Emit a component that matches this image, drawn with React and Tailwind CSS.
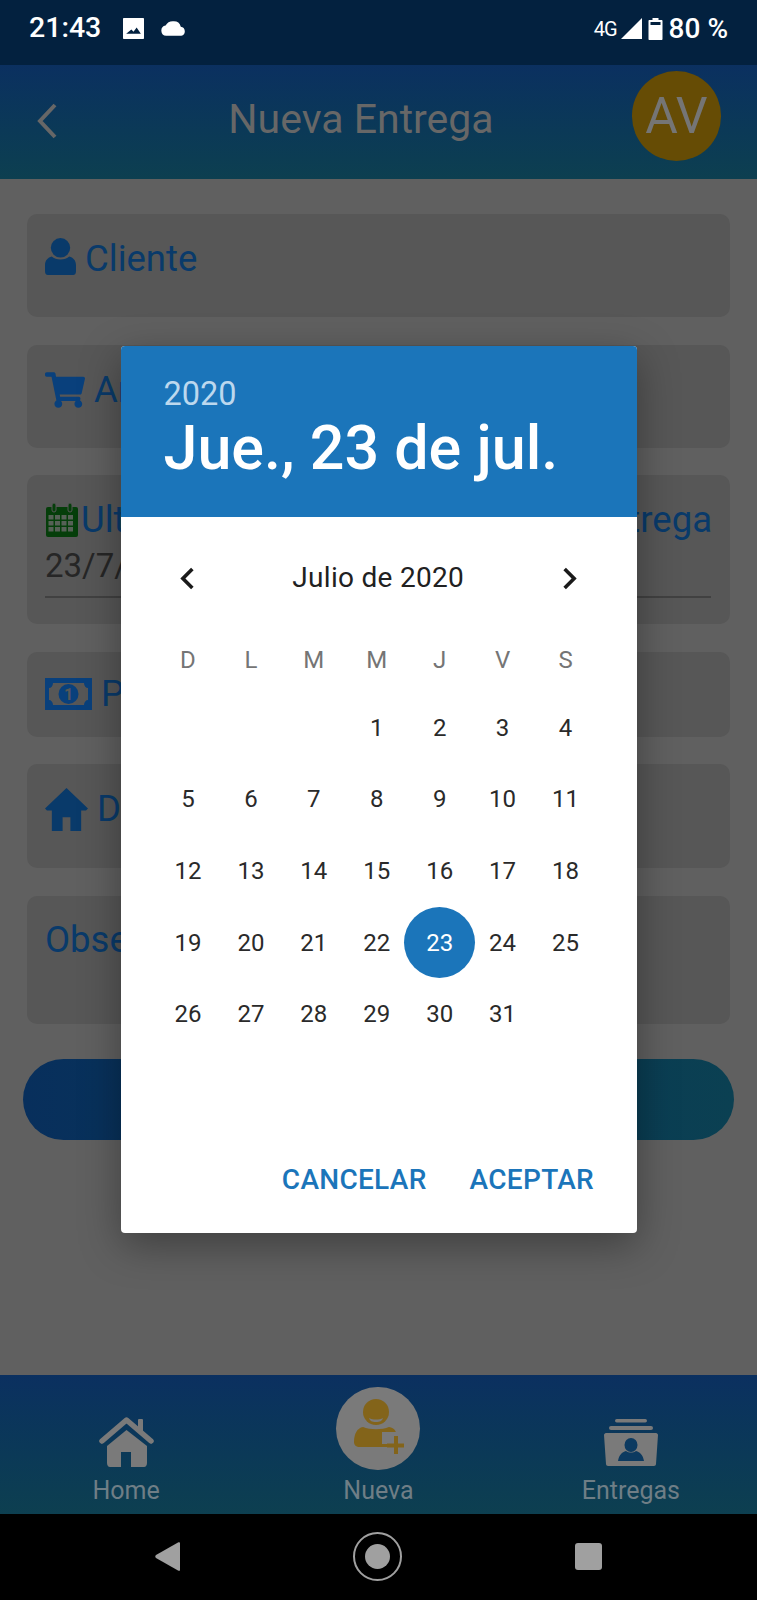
import { FaShoppingCart } from 'react-icons/fa';

const font = { fontFamily: 'Roboto, "Liberation Sans", sans-serif' };

const weeks = [
  ['', '', '', 1, 2, 3, 4],
  [5, 6, 7, 8, 9, 10, 11],
  [12, 13, 14, 15, 16, 17, 18],
  [19, 20, 21, 22, 23, 24, 25],
  [26, 27, 28, 29, 30, 31, ''],
];

function UserIcon() {
  return (
    <svg viewBox="0 0 32 38" className="w-[31px] h-[37px] shrink-0 -mt-[6px] fill-[#093a6a]">
      <circle cx="16" cy="10" r="10" />
      <path d="M7 19c4 4 14 4 18 0 4 1 7 4 7 9v6c0 3-1 4-3 4H3c-2 0-3-1-3-4v-6c0-5 3-8 7-9z" />
    </svg>
  );
}

function CalendarIcon() {
  return (
    <svg viewBox="0 0 34 36" className="w-[34px] h-[36px] shrink-0">
      <rect x="1" y="5" width="32" height="30" rx="2" fill="#053e0a" />
      <rect x="7" y="1" width="4" height="9" rx="2" fill="#053e0a" stroke="#575757" strokeWidth="1" />
      <rect x="23" y="1" width="4" height="9" rx="2" fill="#053e0a" stroke="#575757" strokeWidth="1" />
      <g fill="#566156">
        {[13, 19, 25].map((y) =>
          [3.5, 10, 16.5, 23].map((x) => <rect key={`${x}-${y}`} x={x} y={y} width="5" height="4.5" />)
        )}
      </g>
    </svg>
  );
}

function MoneyIcon() {
  return (
    <svg viewBox="0 0 47 32" className="w-[47px] h-[32px] shrink-0">
      <rect width="47" height="32" fill="#09407c" />
      <path d="M8 5h31c0 3 2 5 4 5v12c-2 0-4 2-4 5H8c0-3-2-5-4-5V10c2 0 4-2 4-5z" fill="#575757" />
      <circle cx="23.5" cy="16" r="10" fill="#09407c" />
      <text x="23.5" y="22" textAnchor="middle" fontSize="16" fontWeight="700" fill="#575757" style={font}>1</text>
    </svg>
  );
}

function HomeIcon() {
  return (
    <svg viewBox="0 0 44 44" className="w-[43px] h-[43px] shrink-0 fill-[#093a6a]">
      <path d="M22 0L0 21l2 2h5v21h11V30h8v14h11V23h5l2-2z" />
    </svg>
  );
}

function NavHouse() {
  return (
    <svg viewBox="0 0 55 50" className="w-[55px] h-[50px]">
      <path d="M3 24L27.500 3 52 24" fill="none" stroke="#7a7a7a" strokeWidth="5.500" strokeLinecap="round" strokeLinejoin="round" />
      <rect x="39" y="2" width="5" height="13" rx="1" fill="#7a7a7a" />
      <path fillRule="evenodd" fill="#7a7a7a" d="M27.500 13L48 29v17c0 2-1 4-3 4H11c-2 0-3-2-3-4V29zM22 35v15h10V35z" />
    </svg>
  );
}

function NavPerson() {
  return (
    <svg viewBox="0 0 50 55" className="w-[50px] h-[55px] -mt-[4px] -ml-[2px]">
      <circle cx="22" cy="13" r="13" fill="#83641a" />
      <path d="M15 19c4 2 10 2 14 0-1 3-3 4-7 4s-6-1-7-4z" fill="#7a7a7a" />
      <path d="M9 28c7 3 19 3 26 0 6 1 8 5 8 11v9H6c-4 0-6-2-6-5 0-8 3-14 9-15z" fill="#83641a" />
      <path d="M36 33h12v7h2v12H36v-7h-8V33z" fill="#7a7a7a" />
      <path d="M40 37h4v7.500h6v4h-6V55h-4v-6.500h-7v-4h7z" fill="#83641a" />
    </svg>
  );
}

function NavBox() {
  return (
    <svg viewBox="0 0 54 48" className="w-[54px] h-[48px]">
      <rect x="11" y="1" width="32" height="3.500" rx="1.700" fill="#7a7a7a" />
      <rect x="5" y="8" width="44" height="4" rx="2" fill="#7a7a7a" />
      <path d="M2 15h50c1 0 2 1 2 2l-2 29c0 1-1 2-2 2H4c-1 0-2-1-2-2L0 17c0-1 1-2 2-2z" fill="#7a7a7a" />
      <ellipse cx="27" cy="27" rx="6.500" ry="7" fill="#0c3a60" />
      <path d="M22 33c3 2 7 2 10 0 4 1 7 4 8 10H14c1-6 4-9 8-10z" fill="#0c3a60" />
    </svg>
  );
}

function Card({ h, children }) {
  return <div className="rounded-[10px] bg-[#575757] px-[18px] pt-[21px]" style={{ height: h }}>{children}</div>;
}

function Label({ children }) {
  return <span className="text-[36.500px] leading-[48px] text-[#093a6a]">{children}</span>;
}

function NavItem({ label, children, gap }) {
  return (
    <div className="flex flex-col items-center justify-end pb-[7px]">
      <div className={gap}>{children}</div>
      <span className="text-[25px] leading-[32px] text-[#6f7e86]">{label}</span>
    </div>
  );
}

export default function App() {
  return (
    <div className="relative w-[757px] h-[1600px] flex flex-col overflow-hidden bg-[#606060]" style={font}>
      {/* status bar */}
      <div className="h-[65px] shrink-0 bg-[#03213f] flex items-center justify-between pl-[29px] pr-[29px] pb-[8px] text-white">
        <div className="flex items-center">
          <span className="text-[28.500px] font-medium leading-none">21:43</span>
          <svg viewBox="0 0 20 20" className="w-[21px] h-[21px] ml-[22px] fill-white">
            <path fillRule="evenodd" d="M1 0h18c.6 0 1 .4 1 1v18c0 .6-.4 1-1 1H1c-.6 0-1-.4-1-1V1c0-.6.4-1 1-1zm2 15h14l-4-6-3 4-2-2z" />
          </svg>
          <svg viewBox="0 0 24 14" className="w-[25px] h-[15px] ml-[17px] fill-white">
            <path d="M5 14a5 5 0 0 1-.6-9.900A8 8 0 0 1 12 0a7 7 0 0 1 7 5.200A4.500 4.500 0 0 1 19.500 14z" />
          </svg>
        </div>
        <div className="flex items-center">
          <span className="text-[20px] leading-none tracking-[-1px]">4G</span>
          <svg viewBox="0 0 22 22" className="w-[21px] h-[21px] ml-[4px] fill-white"><path d="M22 0v22H0z" /></svg>
          <svg viewBox="0 0 14 22" className="w-[15px] h-[22px] ml-[6px]">
            <path fill="#fff" d="M4 0h6v2h3c.6 0 1 .4 1 1v18c0 .6-.4 1-1 1H1c-.6 0-1-.4-1-1V3c0-.6.4-1 1-1h3z" />
            <rect x="2" y="4" width="10" height="3" fill="#03213f" />
          </svg>
          <span className="text-[28px] font-medium leading-none ml-[6px]">80 %</span>
        </div>
      </div>

      {/* header */}
      <div className="h-[114px] shrink-0 bg-gradient-to-b from-[#0b3060] to-[#0d3f50] flex items-center justify-between px-[36px]">
        <svg viewBox="0 0 22 36" className="w-[22px] h-[36px] -mt-[2px]">
          <path d="M19 2L4 18l15 16" fill="none" stroke="#676767" strokeWidth="4" />
        </svg>
        <span className="text-[41px] text-[#676767] ml-[32px] mb-[4px]">Nueva Entrega</span>
        <div className="w-[89px] h-[90px] mb-[12px] rounded-full bg-[#664c05] flex items-center justify-center text-[50px] text-[#757575]">AV</div>
      </div>

      {/* form */}
      <div className="flex-1 flex flex-col">
        <div className="flex flex-col gap-[27.500px] pt-[35px] px-[27px]">
          <Card h={103}>
            <div className="flex items-center gap-[9px]"><UserIcon /><Label>Cliente</Label></div>
          </Card>
          <Card h={103}>
            <div className="flex items-center gap-[9px]"><FaShoppingCart className="w-[40px] h-[36px] text-[#09407c]" /><Label>Artículos</Label></div>
          </Card>
          <Card h={149}>
            <div className="flex items-center justify-between">
              <div className="flex items-center gap-[2px]"><CalendarIcon /><Label>Ultima fecha</Label></div>
              <Label>de entrega</Label>
            </div>
            <div className="mr-[1px] pb-[8px] border-b-[2px] border-[#414141] text-[33px] leading-[44px] text-[#262626]">23/7/2020</div>
          </Card>
          <Card h={85}>
            <div className="flex items-center gap-[9px] -mt-[3px]"><MoneyIcon /><Label>Precio</Label></div>
          </Card>
          <Card h={104}>
            <div className="flex items-center gap-[9px]"><HomeIcon /><Label>Dirección</Label></div>
          </Card>
          <Card h={128}>
            <div className="-mt-[1px]"><Label>Observaciones</Label></div>
          </Card>
        </div>
        <div className="mt-[35px] mx-[23px] h-[81px] rounded-full bg-gradient-to-r from-[#082f5c] to-[#0b4052] flex items-center justify-center text-[30px] text-[#676767]">
          Guardar
        </div>
      </div>

      {/* bottom tabs */}
      <div className="h-[139px] shrink-0 bg-gradient-to-b from-[#0b3060] to-[#0d3f50] grid grid-cols-3">
        <NavItem label="Home" gap="mb-[8px]"><NavHouse /></NavItem>
        <NavItem label="Nueva" gap="mb-[6px]">
          <div className="w-[84px] h-[83px] rounded-full bg-[#7a7a7a] flex items-center justify-center pl-[3px] -mb-[1px]"><NavPerson /></div>
        </NavItem>
        <NavItem label="Entregas" gap="mb-[9px]"><NavBox /></NavItem>
      </div>

      {/* android nav */}
      <div className="h-[86px] shrink-0 bg-black flex items-center justify-center gap-[173px] pb-[2px]">
        <svg viewBox="0 0 25 29" className="w-[25px] h-[29px]"><path d="M25 1v27c0 1-1 1-2 .5L1 16c-1-1-1-2 0-3L23 .5c1-.5 2 0 2 .5z" fill="#a0a0a0" /></svg>
        <div className="w-[49px] h-[49px] rounded-full border-[2.500px] border-[#a0a0a0] flex items-center justify-center">
          <div className="w-[25px] h-[25px] rounded-full bg-[#a0a0a0]" />
        </div>
        <div className="w-[27px] h-[27px] rounded-[3px] bg-[#a0a0a0]" />
      </div>

      {/* date picker */}
      <div className="absolute left-[120.500px] top-[346px] w-[516.500px] h-[887px] rounded-[4px] bg-white overflow-hidden shadow-[0_12px_40px_rgba(0,0,0,0.35)] flex flex-col">
        <div className="h-[171px] shrink-0 bg-[#1b75ba] pl-[43px] pt-[28px] text-white">
          <div className="text-[32.500px] font-[450] leading-[40px] text-[#bcd8ee]">2020</div>
          <div className="mt-[2px] text-[61px] leading-[64px] font-medium">Jue., 23 de jul.</div>
        </div>
        <div className="flex-1 flex flex-col pl-[36px] pr-[40px]">
          <div className="flex items-center justify-between h-[60px] mt-[31px] pl-[9px] pr-[6px]">
            <svg viewBox="0 0 24 24" className="w-[43px] h-[43px] fill-[#1a1a1a]"><path d="M15.410 7.410L14 6l-6 6 6 6 1.410-1.410L10.830 12z" /></svg>
            <span className="text-[28px] font-[450] tracking-[0.3px] text-[#212121]">Julio de 2020</span>
            <svg viewBox="0 0 24 24" className="w-[43px] h-[43px] fill-[#1a1a1a]"><path d="M8.590 16.590L10 18l6-6-6-6-1.410 1.410L13.170 12z" /></svg>
          </div>
          <div className="grid grid-cols-7 mt-[32px] h-[40px] items-center text-center text-[24px] text-[#757575]">
            {['D', 'L', 'M', 'M', 'J', 'V', 'S'].map((d, i) => <span key={i}>{d}</span>)}
          </div>
          <div className="grid grid-cols-7 auto-rows-[71.600px] mt-[12px] text-[24px] text-[#2a2a2a]">
            {weeks.flat().map((d, i) => (
              <div key={i} className="flex items-center justify-center">
                {d === 23 ? (
                  <span className="shrink-0 w-[71px] h-[71px] rounded-full bg-[#1b75ba] text-white flex items-center justify-center">{d}</span>
                ) : d}
              </div>
            ))}
          </div>
        </div>
        <div className="flex justify-end gap-[43px] pr-[43px] pb-[35px] text-[28px] leading-[36px] font-medium tracking-[0.3px] text-[#1b75ba]">
          <span>CANCELAR</span>
          <span>ACEPTAR</span>
        </div>
      </div>
    </div>
  );
}
